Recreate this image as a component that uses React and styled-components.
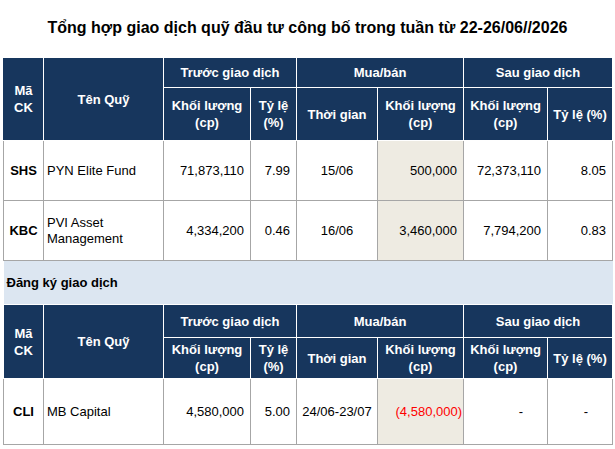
import React from "react";
import styled, { createGlobalStyle } from "styled-components";

const COLS = [40, 120, 87, 46, 81, 86, 84, 65];

const FUNDS_WEEK = [
  {
    code: "SHS",
    name: "PYN Elite Fund",
    beforeVol: "71,873,110",
    beforePct: "7.99",
    time: "15/06",
    vol: "500,000",
    afterVol: "72,373,110",
    afterPct: "8.05",
  },
  {
    code: "KBC",
    name: "PVI Asset Management",
    beforeVol: "4,334,200",
    beforePct: "0.46",
    time: "16/06",
    vol: "3,460,000",
    afterVol: "7,794,200",
    afterPct: "0.83",
  },
];

const FUNDS_REG = [
  {
    code: "CLI",
    name: "MB Capital",
    beforeVol: "4,580,000",
    beforePct: "5.00",
    time: "24/06-23/07",
    vol: "(4,580,000)",
    sell: true,
    afterVol: "-",
    afterPct: "-",
  },
];

function HeadRows({ top, bottom }) {
  return (
    <>
      <tr style={{ height: top }}>
        <Th rowSpan={2}>
          Mã
          <br />
          CK
        </Th>
        <Th rowSpan={2}>Tên Quỹ</Th>
        <Th colSpan={2}>Trước giao dịch</Th>
        <Th colSpan={2}>Mua/bán</Th>
        <Th colSpan={2}>Sau giao dịch</Th>
      </tr>
      <tr style={{ height: bottom }}>
        <Th>
          Khối lượng
          <br />
          (cp)
        </Th>
        <Th>
          Tỷ lệ
          <br />
          (%)
        </Th>
        <Th>Thời gian</Th>
        <Th>
          Khối lượng
          <br />
          (cp)
        </Th>
        <Th>
          Khối lượng
          <br />
          (cp)
        </Th>
        <Th>Tỷ lệ (%)</Th>
      </tr>
    </>
  );
}

function DataRow({ row, height }) {
  return (
    <tr style={{ height }}>
      <Code>{row.code}</Code>
      <Name>{row.name}</Name>
      <Num>{row.beforeVol}</Num>
      <Num>{row.beforePct}</Num>
      <Mid>{row.time}</Mid>
      <Trade $sell={row.sell}>{row.vol}</Trade>
      <Num $dash={row.afterVol === "-"}>{row.afterVol}</Num>
      <Num $dash={row.afterPct === "-"}>{row.afterPct}</Num>
    </tr>
  );
}

export default function App() {
  return (
    <Page>
      <GlobalStyle />
      <Title>Tổng hợp giao dịch quỹ đầu tư công bố trong tuần từ 22-26/06//2026</Title>
      <Table>
        <colgroup>
          {COLS.map((w, i) => (
            <col key={i} style={{ width: w }} />
          ))}
        </colgroup>
        <tbody>
          <HeadRows top={30} bottom={53} />
          {FUNDS_WEEK.map((r) => (
            <DataRow key={r.code} row={r} height={60} />
          ))}
          <tr style={{ height: 44 }}>
            <Section colSpan={8}>Đăng ký giao dịch</Section>
          </tr>
          <HeadRows top={33} bottom={41} />
          {FUNDS_REG.map((r) => (
            <DataRow key={r.code} row={r} height={66} />
          ))}
        </tbody>
      </Table>
    </Page>
  );
}

const GlobalStyle = createGlobalStyle`
  body {
    margin: 0;
    background: #fff;
    font-family: "Liberation Sans", Arial, sans-serif;
  }
`;

const Page = styled.div`
  width: 615px;
  padding: 18px 0 0 3px;
  box-sizing: border-box;
`;

const Title = styled.h1`
  margin: 0 0 19px;
  font-size: 16px;
  line-height: 20px;
  font-weight: 700;
  color: #000;
  text-align: center;
  padding-right: 3px;
`;

const Table = styled.table`
  width: 609px;
  table-layout: fixed;
  border-collapse: collapse;
  font-size: 13px;
  color: #000;
`;

const Th = styled.th`
  background: #17365d;
  color: #fff;
  font-weight: 700;
  font-size: 13px;
  line-height: 17px;
  text-align: center;
  vertical-align: middle;
  border: 1px solid #fff;
  padding: 0 1px;
  white-space: nowrap;
  tr:first-child > &:first-child {
    border-left-color: #17365d;
  }
`;

const Td = styled.td`
  border: 1px solid #a6a6a6;
  padding: 0 3px;
  line-height: 16px;
  vertical-align: middle;
`;

const Code = styled(Td)`
  font-weight: 700;
  text-align: center;
  padding: 0;
`;

const Name = styled(Td)`
  text-align: left;
`;

const Num = styled(Td)`
  text-align: right;
  padding-right: ${(p) => (p.$dash ? "24px" : "6px")};
`;

const Mid = styled(Td)`
  text-align: center;
  padding: 0;
`;

const Trade = styled(Td)`
  background: #eeebe2;
  text-align: right;
  padding-right: ${(p) => (p.$sell ? "1px" : "6px")};
  color: ${(p) => (p.$sell ? "#ff0000" : "#000")};
`;

const Section = styled.td`
  background: #dce6f1;
  border-top: 1px solid #a6a6a6;
  font-weight: 700;
  padding: 0 3px;
  text-align: left;
`;
